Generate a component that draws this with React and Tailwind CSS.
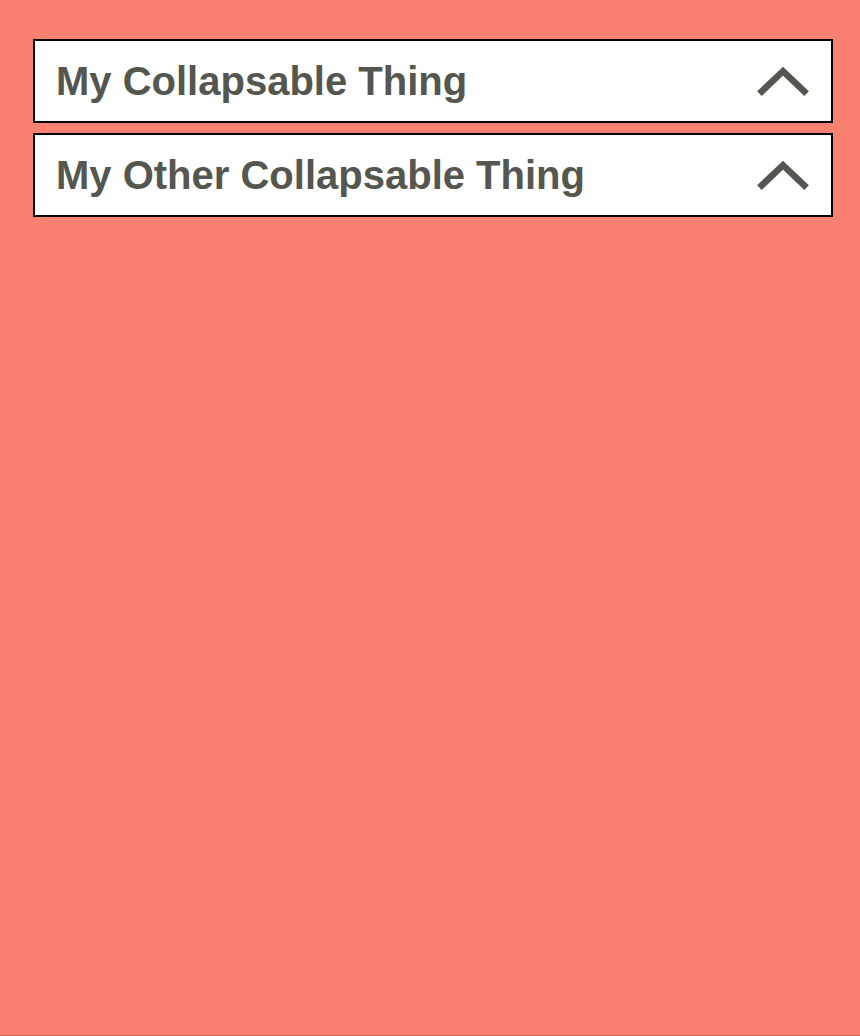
import React from "react";

function Chevron() {
  return (
    <svg width="52" height="30" viewBox="0 0 52 30" className="block shrink-0">
      <path d="M2.4 27.6 L26 5.2 L49.6 27.6" fill="none" stroke="#555650" strokeWidth="6.6" strokeLinejoin="miter" strokeLinecap="butt" />
    </svg>
  );
}

function Item({ title }) {
  return (
    <div className="h-[84px] border-2 border-black bg-white flex items-center justify-between pl-[21px] pr-[22px]">
      <span className="text-[40px] font-bold text-[#555650] leading-[46px]" style={{ fontFamily: '"Liberation Sans", Arial, sans-serif' }}>
        {title}
      </span>
      <Chevron />
    </div>
  );
}

export default function App() {
  return (
    <div className="min-h-[1036px] h-[1036px] bg-[#fa8072] flex flex-col">
      <div className="flex-1 pt-[39px] pl-[33px] pr-[27px] flex flex-col gap-[10px]">
        <Item title="My Collapsable Thing" />
        <Item title="My Other Collapsable Thing" />
      </div>
      <div className="h-px bg-[#c86a62]" />
    </div>
  );
}
